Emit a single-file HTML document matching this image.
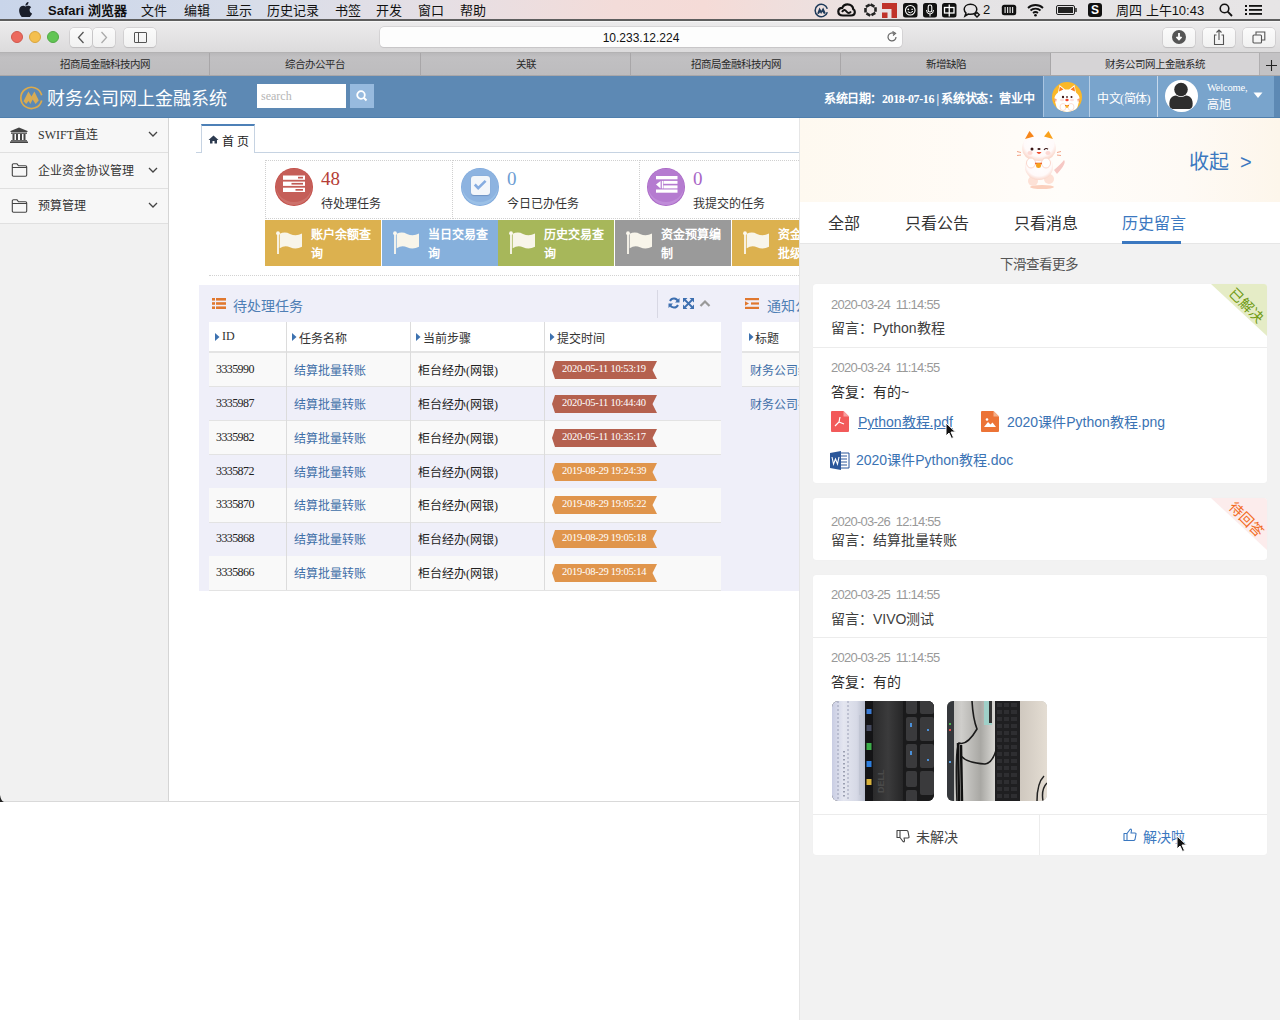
<!DOCTYPE html>
<html lang="zh-CN"><head><meta charset="utf-8">
<style>
*{box-sizing:border-box;margin:0;padding:0}
html,body{width:1280px;height:1020px;overflow:hidden;background:#fff;font-family:"Liberation Sans",sans-serif;}
.abs{position:absolute}
#menubar{position:absolute;left:0;top:0;width:1280px;height:21px;background:linear-gradient(90deg,#c9d5ea 0%,#d8dde9 20%,#e6dfe4 35%,#f3dcd9 48%,#f5dbd7 55%,#ede0df 64%,#e5e3e5 72%,#e7e5e6 100%);border-bottom:2px solid #5e5e5e;font-size:13px;color:#111}
#menubar>span{position:absolute;top:0px;white-space:nowrap}
#toolbar{position:absolute;left:0;top:21px;width:1280px;height:32px;background:linear-gradient(#ecebec,#dcdbdc);border-top:1px solid #f6f6f6;border-bottom:1px solid #b3b2b3}
#tabbar{position:absolute;left:0;top:53px;width:1280px;height:23px;background:linear-gradient(#b9b8ba,#c1c0c2 20%,#bdbcbe);border-bottom:1px solid #a9a7a9}
.tab{position:absolute;top:0;height:22px;border-left:1px solid #a8a6a8;font-size:10.5px;color:#2a2a2a;text-align:center;line-height:23px}
#header{position:absolute;left:0;top:76px;width:1280px;height:42px;background:#5d89b4}
#sidebar{position:absolute;left:0;top:118px;width:169px;height:683px;background:#f1f1f1;border-right:1px solid #d5d5d5}
#content{position:absolute;left:169px;top:118px;width:630px;height:683px;background:#fff;overflow:hidden}
#panel{position:absolute;left:799px;top:118px;width:481px;height:902px;background:#f2f2f2;border-left:1px solid #e6e6e6}
#winbottom{position:absolute;left:0;top:801px;width:799px;height:1px;background:#d9d9d9}
.btn{background:linear-gradient(#fbfbfb,#f1f1f1);border-radius:4px;box-shadow:0 0 0 0.5px #c2c0c2,0 0.5px 1px rgba(0,0,0,.15)}
.sitem{position:absolute;left:0;width:168px;background:#f7f7f7;border-bottom:1px solid #e0e0e0}
.stext{font-size:12px;color:#333;white-space:nowrap}
.statbox{height:59px;border:1px dotted #d0d0d0}
.ns{font-family:"Liberation Sans",sans-serif}
#toolbar>*{margin-top:-2px}
.serif{font-family:"Liberation Serif",serif}
.cj{font-family:"Liberation Sans",sans-serif}
</style></head>
<body>
<div id="menubar">
<svg class="abs" style="left:19px;top:2px" width="13" height="15" viewBox="0 0 13 15"><path d="M10.6 8c0-1.9 1.6-2.8 1.6-2.8-.9-1.3-2.3-1.5-2.8-1.5-1.2-.1-2.3.7-2.9.7-.6 0-1.5-.7-2.5-.7C2.7 3.7 1.5 4.5.8 5.7c-1.4 2.4-.4 6 1 8 .7 1 1.4 2 2.5 2 1 0 1.4-.7 2.6-.7s1.5.7 2.6.6c1.1 0 1.8-1 2.4-2 .8-1.1 1.1-2.2 1.1-2.2S10.6 10.700 10.6 8zM8.700 2.400C9.200 1.800 9.600.9 9.500 0c-.8 0-1.700.5-2.300 1.200-.5.600-.9 1.500-.8 2.300.9.1 1.800-.4 2.300-1.100z" fill="#1a1e2a"></path></svg>
<span style="left: 48px; font-weight: bold; font-size: 13px; line-height: 1.2; top: 3px;">Safari <span class="cj">浏览器</span></span>
<span style="left: 141px; line-height: 1.2; top: 3px;"><span class="cj">文件</span></span>
<span style="left: 184px; line-height: 1.2; top: 3px;"><span class="cj">编辑</span></span>
<span style="left: 226px; line-height: 1.2; top: 3px;"><span class="cj">显示</span></span>
<span style="left: 267px; line-height: 1.2; top: 3px;"><span class="cj">历史记录</span></span>
<span style="left: 335px; line-height: 1.2; top: 3px;"><span class="cj">书签</span></span>
<span style="left: 376px; line-height: 1.2; top: 3px;"><span class="cj">开发</span></span>
<span style="left: 418px; line-height: 1.2; top: 3px;"><span class="cj">窗口</span></span>
<span style="left: 460px; line-height: 1.2; top: 3px;"><span class="cj">帮助</span></span>
<svg class="abs" style="left:814px;top:3px" width="15" height="15" viewBox="0 0 15 15"><path d="M13.300 5.800 A6.200 6.200 0 1 0 13.300 9.200" fill="none" stroke="#1d3a5a" stroke-width="1.500"></path><path d="M3.200 10.500 L5.500 4.500 L7.300 7.800 L9.200 4.500 L11.800 10.200 L10 11 L8.300 8.800 L7.200 11 L6 9.200 L4.800 11 Z" fill="#1d3a5a"></path></svg>
<svg class="abs" style="left:837px;top:3px" width="19" height="14" viewBox="0 0 19 14"><path d="M6 12.500 C2.500 12.500 1.300 10.500 1.300 8.500 C1.300 6.300 3 4.800 5.300 4.800 C6.300 2.300 8.500 1.300 10.500 1.300 C14 1.300 16 3.800 16.300 6.300 C17.500 6.800 17.800 8 17.800 9 C17.800 11 16.300 12.500 14 12.500 Z" fill="none" stroke="#111" stroke-width="2.200"></path><path d="M5 9 C6.500 6.500 8 6.500 9.500 8.500 C11 10.500 12.500 10.500 14 8.500" fill="none" stroke="#111" stroke-width="2"></path></svg>
<svg class="abs" style="left:864px;top:3px" width="13" height="14" viewBox="0 0 13 14"><path d="M6.500 1.300 L11.500 4.200 L11.500 9.800 L6.500 12.700 L1.500 9.800 L1.500 4.200 Z" fill="none" stroke="#222" stroke-width="2.600" stroke-dasharray="4.500 1.300"></path></svg>
<svg class="abs" style="left:882px;top:3px" width="16" height="15" viewBox="0 0 16 15"><path d="M0 0 H15 V15 H9.500 V6 H0 Z" fill="#c0332a"></path><rect x="0" y="9.500" width="5.500" height="5.500" fill="#c0332a"></rect></svg>
<svg class="abs" style="left:903px;top:3px" width="15" height="15" viewBox="0 0 15 15"><rect x="0" y="0" width="14.500" height="14.500" rx="2.500" fill="#111"></rect><circle cx="7.250" cy="7.250" r="4.800" fill="none" stroke="#fff" stroke-width="1.100"></circle><circle cx="5.300" cy="6.300" r="0.900" fill="#fff"></circle><path d="M8.300 6.300 H10 M4.800 8.800 Q7.500 11 10 8.300" stroke="#fff" stroke-width="1" fill="none"></path></svg>
<svg class="abs" style="left:923px;top:3px" width="15" height="15" viewBox="0 0 15 15"><rect x="0" y="0" width="14" height="14.500" rx="2.500" fill="#111"></rect><rect x="5.200" y="2" width="3.600" height="7" rx="1.800" fill="none" stroke="#fff" stroke-width="1.100"></rect><path d="M3.500 7 Q3.500 11 7 11 Q10.500 11 10.500 7 M7 11 V13.500" stroke="#fff" stroke-width="1" fill="none"></path></svg>
<svg class="abs" style="left:942px;top:3px" width="15" height="15" viewBox="0 0 15 15"><rect x="0" y="0" width="14.500" height="14.500" rx="2.500" fill="#111"></rect><rect x="2.500" y="4.500" width="9.500" height="5.500" fill="none" stroke="#fff" stroke-width="1.300"></rect><path d="M7.250 1.500 V13.500" stroke="#fff" stroke-width="1.300"></path></svg>
<svg class="abs" style="left:963px;top:3px" width="18" height="15" viewBox="0 0 18 15"><path d="M7.500 1.200 C11.300 1.200 13.800 3.500 13.800 6.300 C13.800 9 11.300 11.300 7.500 11.300 C6.700 11.300 6 11.200 5.300 11 L2 13 L3 10 C1.800 9 1.200 7.700 1.200 6.300 C1.200 3.500 3.700 1.200 7.500 1.200 Z" fill="none" stroke="#111" stroke-width="1.500"></path><path d="M14 9.500 L16.300 11.800 L14 14 L11.700 11.800 Z" fill="none" stroke="#111" stroke-width="1.400"></path></svg>
<span style="left: 983px; top: 2px; font-size: 13px; line-height: 1.2;">2</span>
<svg class="abs" style="left:1001px;top:4px" width="16" height="12" viewBox="0 0 16 12"><rect x="0.800" y="0.800" width="14.400" height="10.400" rx="2.500" fill="#111"></rect><g fill="#ddd"><rect x="3.500" y="3" width="1.200" height="6"></rect><rect x="6" y="3" width="1.200" height="6"></rect><rect x="8.500" y="3" width="1.200" height="6"></rect><rect x="11" y="3" width="1.200" height="6"></rect></g></svg>
<svg class="abs" style="left:1027px;top:3px" width="17" height="14" viewBox="0 0 17 14"><path d="M1 5 C5 1 12 1 16 5" stroke="#111" stroke-width="1.8" fill="none"></path><path d="M3.500 7.500 C6 5 11 5 13.500 7.500" stroke="#111" stroke-width="1.800" fill="none"></path><path d="M6 10 C7.500 8.800 9.500 8.800 11 10" stroke="#111" stroke-width="1.800" fill="none"></path><circle cx="8.500" cy="12.300" r="1.300" fill="#111"></circle></svg>
<div class="abs" style="left:1056px;top:5px;width:19px;height:10px;border:1.3px solid #222;border-radius:2px;padding:1px"><div style="width:100%;height:100%;background:#222"></div></div>
<div class="abs" style="left:1075px;top:8px;width:2px;height:4px;background:#555"></div>
<div class="abs" style="left:1088px;top:3px;width:14px;height:14px;background:#111;border-radius:3px;color:#fff;font-size:12px;line-height:14px;text-align:center;font-weight:bold">S</div>
<span style="left: 1116px; top: 3px; font-size: 13px; line-height: 1.2;"><span class="cj">周四</span> <span class="cj">上午</span>10:43</span>
<svg class="abs" style="left:1219px;top:3px" width="14" height="14" viewBox="0 0 14 14"><circle cx="5.500" cy="5.500" r="4.300" fill="none" stroke="#111" stroke-width="1.600"></circle><path d="M8.700 8.700 L13 13" stroke="#111" stroke-width="1.800"></path></svg>
<svg class="abs" style="left:1245px;top:4px" width="17" height="12" viewBox="0 0 17 12"><g fill="#111"><rect x="0" y="1" width="2" height="2"></rect><rect x="0" y="5" width="2" height="2"></rect><rect x="0" y="9" width="2" height="2"></rect><rect x="4" y="1" width="13" height="1.800"></rect><rect x="4" y="5" width="13" height="1.800"></rect><rect x="4" y="9" width="13" height="1.800"></rect></g></svg>
</div>
<div id="toolbar">
<div class="abs" style="left:11px;top:11px;width:12px;height:12px;border-radius:50%;background:#ec6a5e;border:0.5px solid #d0584d"></div>
<div class="abs" style="left:29px;top:11px;width:12px;height:12px;border-radius:50%;background:#f4bf4f;border:0.5px solid #d9a53e"></div>
<div class="abs" style="left:47px;top:11px;width:12px;height:12px;border-radius:50%;background:#61c554;border:0.5px solid #52a946"></div>
<div class="btn abs" style="left:70px;top:8px;width:22px;height:19px"></div>
<div class="btn abs" style="left:93px;top:8px;width:22px;height:19px"></div>
<svg class="abs" style="left:77px;top:11px" width="8" height="13" viewBox="0 0 8 13"><path d="M6.500 1 L1.500 6.500 L6.500 12" stroke="#555" stroke-width="1.300" fill="none"></path></svg>
<svg class="abs" style="left:100px;top:11px" width="8" height="13" viewBox="0 0 8 13"><path d="M1.500 1 L6.500 6.500 L1.500 12" stroke="#aaa" stroke-width="1.300" fill="none"></path></svg>
<div class="btn abs" style="left:124px;top:8px;width:32px;height:19px"></div>
<div class="abs" style="left:134px;top:12px;width:13px;height:11px;border:1.300px solid #555;border-radius:1px"></div>
<div class="abs" style="left:138px;top:12px;width:1.300px;height:11px;background:#555"></div>
<div class="abs" style="left:380px;top:7px;width:522px;height:20px;background:#fdfdfd;border-radius:4px;box-shadow:0 0 0 0.5px #c6c4c6,0 0.5px 1px rgba(0,0,0,.1);font-size:12px;text-align:center;line-height:22px;color:#111">10.233.12.224</div>
<svg class="abs" style="left:886px;top:11px" width="12" height="12" viewBox="0 0 12 12"><path d="M10 6 A4 4 0 1 1 8 2.500" stroke="#666" stroke-width="1.200" fill="none"></path><path d="M6.500 0.500 L9.500 2.300 L7 4.500" stroke="#666" stroke-width="1.200" fill="none"></path></svg>
<div class="btn abs" style="left:1163px;top:8px;width:32px;height:19px"></div>
<div class="abs" style="left:1172px;top:10px;width:14px;height:14px;border-radius:50%;background:#555"></div>
<svg class="abs" style="left:1172px;top:10px" width="14" height="14" viewBox="0 0 14 14"><path d="M7 3 L7 9 M4.500 6.800 L7 9.500 L9.500 6.800" stroke="#fff" stroke-width="1.800" fill="none"></path></svg>
<div class="btn abs" style="left:1203px;top:8px;width:32px;height:19px"></div>
<svg class="abs" style="left:1211px;top:9px" width="16" height="17" viewBox="0 0 16 17"><path d="M5.500 6 L3.500 6 L3.500 15.500 L12.500 15.500 L12.500 6 L10.500 6" stroke="#555" stroke-width="1.100" fill="none"></path><path d="M8 11 L8 1 M5.500 3.500 L8 1 L10.500 3.500" stroke="#555" stroke-width="1.100" fill="none"></path></svg>
<div class="btn abs" style="left:1243px;top:8px;width:32px;height:19px"></div>
<svg class="abs" style="left:1252px;top:11px" width="14" height="13" viewBox="0 0 14 13"><rect x="1" y="4" width="8.500" height="8" stroke="#555" stroke-width="1.100" fill="none" rx="1"></rect><path d="M4 3.800 L4 1 L12.800 1 L12.800 9 L9.800 9" stroke="#555" stroke-width="1.100" fill="none"></path></svg>
</div>
<div id="tabbar">
<div class="tab" style="left:0;width:210px;border-left:none"><span class="cj">招商局金融科技内网</span></div>
<div class="tab" style="left:209px;width:211px"><span class="cj">综合办公平台</span></div>
<div class="tab" style="left:420px;width:210px"><span class="cj">关联</span></div>
<div class="tab" style="left:630px;width:210px"><span class="cj">招商局金融科技内网</span></div>
<div class="tab" style="left:840px;width:210px"><span class="cj">新增缺陷</span></div>
<div class="tab" style="left:1050px;width:210px;background:#d6d4d6;border-right:1px solid #b0aeb0;height:22px"><span class="cj">财务公司网上金融系统</span></div>
<div class="tab" style="left:1260px;width:20px;border-left:none;background:#c3c2c4"></div><svg class="abs" style="left:1266px;top:7px" width="11" height="11" viewBox="0 0 11 11"><path d="M5.5 0 V11 M0 5.5 H11" stroke="#222" stroke-width="1.1"></path></svg>
</div>
<div id="header">
<svg class="abs" style="left:18px;top:8px" width="28" height="28" viewBox="0 0 28 28"><path d="M23.7 11.3 A10.6 10.6 0 1 0 23.7 16.5" fill="none" stroke="#dcaa4c" stroke-width="1.7"></path><path d="M5.5 17.3 L10.4 7.6 L13.5 12.6 L16.4 7.6 L20.8 16.5 L17.6 20 L14.6 15.6 L12.4 20 L10.6 17 L8.2 20 Z" fill="#d8ab54"></path></svg>
<div class="abs serif" style="left: 47px; top: 13px; font-size: 18px; color: rgb(255, 255, 255); white-space: nowrap; letter-spacing: 0px; line-height: 1.2;"><span class="cj">财务公司网上金融系统</span></div>
<div class="abs serif" style="left:257px;top:8px;width:89px;height:24px;background:#fff;font-size:12px;color:#b5b5b5;line-height:24px;padding-left:4px">search</div>
<div class="abs" style="left:350px;top:8px;width:24px;height:24px;background:#97bade"></div>
<svg class="abs" style="left:355px;top:13px" width="14" height="14" viewBox="0 0 14 14"><circle cx="6" cy="6" r="3.8" fill="none" stroke="#fff" stroke-width="1.8"></circle><path d="M8.8 8.8 L11.5 11.5" stroke="#fff" stroke-width="2"></path></svg>
<div class="abs serif" style="left: 824px; top: 16px; font-size: 12px; letter-spacing: -0.4px; color: rgb(255, 255, 255); font-weight: bold; white-space: nowrap; line-height: 1.2;"><span class="cj">系统日期：</span>2018-07-16 | <span class="cj">系统状态：营业中</span></div>
<div class="abs" style="left:1043px;top:0;width:231px;height:41px;background:#79a4cc;border-left:1px solid #a9c5e2"></div>
<div class="abs" style="left:1089px;top:0;width:1px;height:41px;background:#b7cfe6"></div>
<div class="abs" style="left:1157px;top:0;width:1px;height:41px;background:#c7d9ec"></div>
<div class="abs" style="left:0;top:41px;width:1280px;height:1px;background:#4f7fad"></div>
<div class="abs" style="left:1052px;top:5.5px;width:30px;height:30px;border-radius:50%;background:#fbb828;overflow:hidden">
<svg width="30" height="30" viewBox="0 0 30 30">
<path d="M6 10.5 L7.5 3.0 L13 7.5 L17 7.5 L22.5 3.0 L24 10.5 Q29 14.5 27 19.5 L24 30.5 L6 30.5 L3 19.5 Q1 14.5 6 10.5 Z" fill="#fff"></path>
<path d="M7.8 4.5 L7 9.5 L11.5 7.5 Z M22.2 4.5 L23 9.5 L18.5 7.5 Z" fill="#fb7a1c"></path>
<ellipse cx="11" cy="15.0" rx="1.1" ry="1.2" fill="#3a1010"></ellipse><ellipse cx="19.5" cy="15.0" rx="1" ry="0.9" fill="#3a1010"></ellipse>
<ellipse cx="15" cy="15.0" rx="1.2" ry="0.8" fill="#3a1010"></ellipse>
<ellipse cx="15" cy="18.0" rx="1.7" ry="1.2" fill="#f5402a"></ellipse>
<ellipse cx="10" cy="18.0" rx="2" ry="1.3" fill="#fde0dc"></ellipse><ellipse cx="20" cy="18.0" rx="2" ry="1.3" fill="#fde0dc"></ellipse>
<path d="M2 17.0 L4.5 17.5 M2 19.0 L4.5 18.8 M28 17.0 L25.5 17.5 M28 19.0 L25.5 18.8" stroke="#f0733a" stroke-width="0.8"></path>
<ellipse cx="11" cy="25.0" rx="3" ry="3.5" fill="#fff" stroke="#fbd6c8" stroke-width="0.8"></ellipse><ellipse cx="19" cy="25.0" rx="3" ry="3.5" fill="#fff" stroke="#fbd6c8" stroke-width="0.8"></ellipse>
<path d="M13 23.5 L17 23.5" stroke="#f26a2a" stroke-width="1.2"></path><circle cx="15" cy="24.5" r="1.4" fill="#f7b02a"></circle>
</svg></div>
<div class="abs serif" style="left: 1097px; top: 16px; font-size: 12px; letter-spacing: -0.5px; color: rgb(255, 255, 255); white-space: nowrap; line-height: 1.2;"><span class="cj">中文</span>(<span class="cj">简体</span>)</div>
<div class="abs" style="left:1165px;top:3.7px;width:32.6px;height:32.6px;border-radius:50%;background:#fff;overflow:hidden">
 <svg width="32" height="32" viewBox="0 0 32 32"><path d="M4.5 26 C3.5 19 7 15.5 11 15.5 L21 15.5 C25 15.5 28.5 19 27.5 26 C27 28.5 25 29 23 29 L9 29 C7 29 5 28.5 4.5 26 Z" fill="#2e2e2e"></path><circle cx="16" cy="9.5" r="7.6" fill="#fff"></circle><circle cx="16" cy="9.5" r="6.8" fill="#2e2e2e"></circle></svg>
</div>
<div class="abs serif" style="left: 1207px; top: 6px; font-size: 10.5px; letter-spacing: -0.2px; color: rgb(255, 255, 255); white-space: nowrap; line-height: 1.2;">Welcome,</div>
<div class="abs serif" style="left: 1207px; top: 22px; font-size: 12px; color: rgb(255, 255, 255); white-space: nowrap; line-height: 1.2;"><span class="cj">高旭</span></div>
<svg class="abs" style="left:1253px;top:16px" width="10" height="7" viewBox="0 0 10 7"><path d="M0.5 0.5 L9.5 0.5 L5 6 Z" fill="#fff"></path></svg>
</div>
<div id="sidebar">
<div class="sitem" style="top:0;height:35px"></div>
<div class="sitem" style="top:35px;height:36px"></div>
<div class="sitem" style="top:71px;height:35px"></div>
<svg class="abs" style="left:10px;top:9px" width="18" height="16" viewBox="0 0 18 16"><path d="M9 0.5 L17.5 4 L17.5 5 L0.5 5 L0.5 4 Z" fill="#444"></path><rect x="1" y="5.5" width="16" height="1.3" fill="#444"></rect><rect x="2.5" y="7" width="2" height="6" fill="#444"></rect><rect x="6" y="7" width="2" height="6" fill="#444"></rect><rect x="10" y="7" width="2" height="6" fill="#444"></rect><rect x="13.5" y="7" width="2" height="6" fill="#444"></rect><rect x="1" y="13.2" width="16" height="1.3" fill="#444"></rect><rect x="0" y="14.5" width="18" height="1.5" fill="#444"></rect></svg>
<svg class="abs" style="left:11px;top:45px" width="17" height="14" viewBox="0 0 17 14"><path d="M1.3 2 Q1.3 0.8 2.5 0.8 L6 0.8 L7.5 2.8 L14.5 2.8 Q15.7 2.8 15.7 4 L15.7 12 Q15.7 13.2 14.5 13.2 L2.5 13.2 Q1.3 13.2 1.3 12 Z M1.3 4.5 L15.7 4.5" fill="none" stroke="#444" stroke-width="1.1"></path></svg>
<svg class="abs" style="left:11px;top:81px" width="17" height="14" viewBox="0 0 17 14"><path d="M1.3 2 Q1.3 0.8 2.5 0.8 L6 0.8 L7.5 2.8 L14.5 2.8 Q15.7 2.8 15.7 4 L15.7 12 Q15.7 13.2 14.5 13.2 L2.5 13.2 Q1.3 13.2 1.3 12 Z M1.3 4.5 L15.7 4.5" fill="none" stroke="#444" stroke-width="1.1"></path></svg>
<div class="abs serif stext" style="left: 38px; top: 10px; line-height: 1.2;">SWIFT<span class="cj">直连</span></div>
<div class="abs serif stext" style="left: 38px; top: 46px; line-height: 1.2;"><span class="cj">企业资金协议管理</span></div>
<div class="abs serif stext" style="left: 38px; top: 81px; line-height: 1.2;"><span class="cj">预算管理</span></div>
<svg class="abs" style="left:148px;top:13px" width="10" height="7" viewBox="0 0 10 7"><path d="M1 1 L5 5 L9 1" stroke="#444" stroke-width="1.3" fill="none"></path></svg>
<svg class="abs" style="left:148px;top:49px" width="10" height="7" viewBox="0 0 10 7"><path d="M1 1 L5 5 L9 1" stroke="#444" stroke-width="1.3" fill="none"></path></svg>
<svg class="abs" style="left:148px;top:84px" width="10" height="7" viewBox="0 0 10 7"><path d="M1 1 L5 5 L9 1" stroke="#444" stroke-width="1.3" fill="none"></path></svg>
</div>
<div id="content">
<div class="abs" style="left:27px;top:34px;width:603px;height:1px;background:#c6d3e2"></div>
<div class="abs" style="left:32px;top:6px;width:54px;height:29px;background:#fff;border:1px solid #c6d3e2;border-top:2px solid #4d80b7;border-bottom:none"></div>
<svg class="abs" style="left:39px;top:17px" width="11" height="9" viewBox="0 0 11 9"><path d="M5.5 0.5 L10.5 5 L9 5 L9 8.5 L6.5 8.5 L6.5 6 L4.5 6 L4.5 8.5 L2 8.5 L2 5 L0.5 5 Z" fill="#2d3b50"></path></svg>
<div class="abs serif" style="left: 53px; top: 17px; font-size: 12px; color: rgb(34, 34, 34); letter-spacing: 3px; white-space: nowrap; line-height: 1.2;"><span class="cj">首页</span></div>
<!-- stats -->
<div class="abs" style="left:105.60000000000002px;top:49.80000000000001px;width:38px;height:38px;border-radius:50%;background:#c24e48"></div><div class="abs" style="left:106.60000000000002px;top:50.80000000000001px;width:36px;height:36px;border-radius:50%;background:#cd716b"></div><div class="abs" style="left:106.60000000000002px;top:50.80000000000001px;width:36px;height:33px;border-radius:50%;background:#c55e58"></div><svg class="abs" style="left:114px;top:57px" width="23" height="18" viewBox="0 0 23 18"><g fill="#fff"><rect x="0" y="0.5" width="22" height="4.3"></rect><rect x="0" y="6.6" width="22" height="4.3"></rect><rect x="0" y="12.7" width="22" height="4.3"></rect></g><g fill="#c05a54"><rect x="15" y="1.8" width="5" height="1.7"></rect><rect x="8.5" y="7.9" width="11.5" height="1.7"></rect><rect x="12.5" y="14" width="7.5" height="1.7"></rect></g></svg>
<div class="abs" style="left:292px;top:50px;width:38px;height:38px;border-radius:50%;background:#80aadd"></div><div class="abs" style="left:293px;top:51px;width:36px;height:36px;border-radius:50%;background:#9bc0e6"></div><div class="abs" style="left:293px;top:51px;width:36px;height:33px;border-radius:50%;background:#8db3e0"></div><div class="abs" style="left:302px;top:58px;width:18.5px;height:18.5px;background:#f3f6fa;border-radius:3px;box-shadow:0 0.5px 1px rgba(60,90,140,.35)"></div><svg class="abs" style="left:302px;top:58px" width="19" height="19" viewBox="0 0 19 19"><path d="M3.8 8.5 L7.2 12.2 L14.6 4.8" stroke="#86ace0" stroke-width="2.6" fill="none"></path></svg>
<div class="abs" style="left:478px;top:50px;width:38px;height:38px;border-radius:50%;background:#aa68c6"></div><div class="abs" style="left:479px;top:51px;width:36px;height:36px;border-radius:50%;background:#c08cd9"></div><div class="abs" style="left:479px;top:51px;width:36px;height:33px;border-radius:50%;background:#b57bd0"></div><svg class="abs" style="left:486.5px;top:57.5px" width="22" height="17" viewBox="0 0 22 17"><g fill="#fff"><rect x="0" y="0" width="21.5" height="3.3"></rect><rect x="7.5" y="4.9" width="14" height="2.9"></rect><rect x="7.5" y="9.4" width="14" height="3"></rect><rect x="0" y="13.5" width="21.5" height="3.2"></rect><rect x="5.8" y="4.9" width="1.3" height="7.5"></rect><path d="M0 8.6 L4.6 4.9 L4.6 12.4 Z"></path></g></svg>
<div class="abs serif" style="left: 152px; top: 50px; font-size: 19px; color: rgb(181, 61, 54); line-height: 1.2;">48</div>
<div class="abs serif" style="left: 338px; top: 50px; font-size: 19px; color: rgb(109, 157, 211); line-height: 1.2;">0</div>
<div class="abs serif" style="left: 524px; top: 50px; font-size: 19px; color: rgb(168, 102, 198); line-height: 1.2;">0</div>
<div class="abs serif" style="left: 152px; top: 79px; font-size: 12px; color: rgb(51, 51, 51); white-space: nowrap; line-height: 1.2;"><span class="cj">待处理任务</span></div>
<div class="abs serif" style="left: 338px; top: 79px; font-size: 12px; color: rgb(51, 51, 51); white-space: nowrap; line-height: 1.2;"><span class="cj">今日已办任务</span></div>
<div class="abs serif" style="left: 524px; top: 79px; font-size: 12px; color: rgb(51, 51, 51); white-space: nowrap; line-height: 1.2;"><span class="cj">我提交的任务</span></div>
<div class="abs" style="left:96px;top:102px;width:116px;height:46px;background:#dcb14f"></div>
<svg class="abs" style="left:107px;top:113px" width="27" height="23" viewBox="0 0 27 23"><circle cx="2" cy="2.2" r="1.9" fill="#fbf8ee"></circle><rect x="1.1" y="2" width="1.8" height="21" fill="#fbf8ee"></rect><path d="M3.7 2.8 Q9 0.3 14 3 Q20 5.8 26 2.6 L26 15.8 Q20 19 14 16.3 Q9 13.6 3.7 17.2 Z" fill="#f8f5ea"></path></svg>
<div class="abs serif" style="left:142px;top:108px;font-size:12px;line-height:19px;color:#fff;font-weight:bold;white-space:nowrap"><span class="cj">账户余额查</span><br><span class="cj">询</span></div>
<div class="abs" style="left:213px;top:102px;width:116px;height:46px;background:#86b0dc"></div>
<svg class="abs" style="left:224px;top:113px" width="27" height="23" viewBox="0 0 27 23"><circle cx="2" cy="2.2" r="1.9" fill="#fbf8ee"></circle><rect x="1.1" y="2" width="1.8" height="21" fill="#fbf8ee"></rect><path d="M3.7 2.8 Q9 0.3 14 3 Q20 5.8 26 2.6 L26 15.8 Q20 19 14 16.3 Q9 13.6 3.7 17.2 Z" fill="#f8f5ea"></path></svg>
<div class="abs serif" style="left:259px;top:108px;font-size:12px;line-height:19px;color:#fff;font-weight:bold;white-space:nowrap"><span class="cj">当日交易查</span><br><span class="cj">询</span></div>
<div class="abs" style="left:329px;top:102px;width:116px;height:46px;background:#a7b75a"></div>
<svg class="abs" style="left:340px;top:113px" width="27" height="23" viewBox="0 0 27 23"><circle cx="2" cy="2.2" r="1.9" fill="#fbf8ee"></circle><rect x="1.1" y="2" width="1.8" height="21" fill="#fbf8ee"></rect><path d="M3.7 2.8 Q9 0.3 14 3 Q20 5.8 26 2.6 L26 15.8 Q20 19 14 16.3 Q9 13.6 3.7 17.2 Z" fill="#f8f5ea"></path></svg>
<div class="abs serif" style="left:375px;top:108px;font-size:12px;line-height:19px;color:#fff;font-weight:bold;white-space:nowrap"><span class="cj">历史交易查</span><br><span class="cj">询</span></div>
<div class="abs" style="left:446px;top:102px;width:116px;height:46px;background:#9a9a9a"></div>
<svg class="abs" style="left:457px;top:113px" width="27" height="23" viewBox="0 0 27 23"><circle cx="2" cy="2.2" r="1.9" fill="#fbf8ee"></circle><rect x="1.1" y="2" width="1.8" height="21" fill="#fbf8ee"></rect><path d="M3.7 2.8 Q9 0.3 14 3 Q20 5.8 26 2.6 L26 15.8 Q20 19 14 16.3 Q9 13.6 3.7 17.2 Z" fill="#f8f5ea"></path></svg>
<div class="abs serif" style="left:492px;top:108px;font-size:12px;line-height:19px;color:#fff;font-weight:bold;white-space:nowrap"><span class="cj">资金预算编</span><br><span class="cj">制</span></div>
<div class="abs" style="left:563px;top:102px;width:116px;height:46px;background:#dcb14f"></div>
<svg class="abs" style="left:574px;top:113px" width="27" height="23" viewBox="0 0 27 23"><circle cx="2" cy="2.2" r="1.9" fill="#fbf8ee"></circle><rect x="1.1" y="2" width="1.8" height="21" fill="#fbf8ee"></rect><path d="M3.7 2.8 Q9 0.3 14 3 Q20 5.8 26 2.6 L26 15.8 Q20 19 14 16.3 Q9 13.6 3.7 17.2 Z" fill="#f8f5ea"></path></svg>
<div class="abs serif" style="left:609px;top:108px;font-size:12px;line-height:19px;color:#fff;font-weight:bold;white-space:nowrap"><span class="cj">资金预算审</span><br><span class="cj">批级</span></div>
<div class="abs" style="left:40px;top:157px;width:600px;height:1px;border-top:1px dotted #d2d2d2"></div>
<div class="abs" style="left:30px;top:167px;width:600px;height:306px;background:#efeff9"></div>
<svg class="abs" style="left:43px;top:180px" width="14" height="11" viewBox="0 0 14 11"><g fill="#e0782f"><rect x="0" y="0" width="3" height="2.6"></rect><rect x="4" y="0" width="10" height="2.6"></rect><rect x="0" y="4.2" width="3" height="2.6"></rect><rect x="4" y="4.2" width="10" height="2.6"></rect><rect x="0" y="8.4" width="3" height="2.6"></rect><rect x="4" y="8.4" width="10" height="2.6"></rect></g></svg>
<div class="abs serif" style="left: 64px; top: 180px; font-size: 14px; color: rgb(79, 127, 181); white-space: nowrap; line-height: 1.2;"><span class="cj">待处理任务</span></div>
<div class="abs" style="left:488px;top:172px;width:1px;height:28px;background:#d8d8e4"></div>
<svg class="abs" style="left:499px;top:179px" width="12" height="12" viewBox="0 0 12 12"><path d="M10 4.5 A4.3 4.3 0 0 0 2 4" stroke="#3d6fb0" stroke-width="2" fill="none"></path><path d="M2 7.5 A4.3 4.3 0 0 0 10 8" stroke="#3d6fb0" stroke-width="2" fill="none"></path><path d="M11.5 1 L11.5 5.5 L7 5.5 Z M0.5 11 L0.5 6.5 L5 6.5Z" fill="#3d6fb0"></path></svg>
<svg class="abs" style="left:514px;top:180px" width="11" height="11" viewBox="0 0 11 11"><path d="M2 2 L9 9 M9 2 L2 9" stroke="#3d6fb0" stroke-width="1.8"></path><path d="M0 0 L4.5 0 L0 4.5Z M11 0 L6.5 0 L11 4.5Z M0 11 L4.5 11 L0 6.5Z M11 11 L6.5 11 L11 6.5Z" fill="#3d6fb0"></path></svg>
<svg class="abs" style="left:530px;top:181px" width="12" height="9" viewBox="0 0 12 9"><path d="M1.5 7 L6 2.5 L10.5 7" stroke="#999" stroke-width="2.2" fill="none"></path></svg>
<svg class="abs" style="left:576px;top:180px" width="14" height="11" viewBox="0 0 14 11"><g fill="#e0782f"><rect x="0" y="0" width="14" height="2.2"></rect><rect x="6" y="4.4" width="8" height="2.2"></rect><rect x="0" y="8.8" width="14" height="2.2"></rect><path d="M0 3.2 L4 5.5 L0 7.8Z"></path></g></svg>
<div class="abs serif" style="left: 598px; top: 180px; font-size: 14px; color: rgb(79, 127, 181); white-space: nowrap; line-height: 1.2;"><span class="cj">通知公告</span></div>
<div class="abs" style="left:40px;top:204px;width:512px;height:31px;background:#fff;border-bottom:2px solid #e4e4e4"></div>
<div class="abs" style="left:40px;top:235.0px;width:512px;height:34.36px;background:#f9f9f9;border-bottom:1px solid #e3e3e3"></div>
<div class="abs serif" style="left: 47px; top: 244px; font-size: 12px; letter-spacing: -0.6px; color: rgb(34, 34, 34); line-height: 1.2;">3335990</div>
<div class="abs serif" style="left: 125px; top: 246px; font-size: 12px; color: rgb(63, 111, 168); white-space: nowrap; line-height: 1.2;"><span class="cj">结算批量转账</span></div>
<div class="abs serif" style="left: 249px; top: 246px; font-size: 12px; color: rgb(34, 34, 34); white-space: nowrap; line-height: 1.2;"><span class="cj">柜台经办</span>(<span class="cj">网银</span>)</div>
<svg class="abs" style="left:383px;top:243.0px" width="106" height="18" viewBox="0 0 106 18"><path d="M3 0 L105 0 L100.5 9 L105 18 L3 18 L0 9 Z" fill="#b5614f"></path></svg>
<div class="abs serif" style="left: 393px; top: 245px; font-size: 10.5px; letter-spacing: -0.25px; color: rgb(255, 255, 255); white-space: nowrap; line-height: 1.2;">2020-05-11 10:53:19</div>
<div class="abs" style="left:40px;top:268.86px;width:512px;height:34.36px;background:transparent;border-bottom:1px solid #e3e3e3"></div>
<div class="abs serif" style="left: 47px; top: 277.86px; font-size: 12px; letter-spacing: -0.6px; color: rgb(34, 34, 34); line-height: 1.2;">3335987</div>
<div class="abs serif" style="left: 125px; top: 279.86px; font-size: 12px; color: rgb(63, 111, 168); white-space: nowrap; line-height: 1.2;"><span class="cj">结算批量转账</span></div>
<div class="abs serif" style="left: 249px; top: 279.86px; font-size: 12px; color: rgb(34, 34, 34); white-space: nowrap; line-height: 1.2;"><span class="cj">柜台经办</span>(<span class="cj">网银</span>)</div>
<svg class="abs" style="left:383px;top:276.86px" width="106" height="18" viewBox="0 0 106 18"><path d="M3 0 L105 0 L100.5 9 L105 18 L3 18 L0 9 Z" fill="#b5614f"></path></svg>
<div class="abs serif" style="left: 393px; top: 278.86px; font-size: 10.5px; letter-spacing: -0.25px; color: rgb(255, 255, 255); white-space: nowrap; line-height: 1.2;">2020-05-11 10:44:40</div>
<div class="abs" style="left:40px;top:302.72px;width:512px;height:34.36px;background:#f9f9f9;border-bottom:1px solid #e3e3e3"></div>
<div class="abs serif" style="left: 47px; top: 311.72px; font-size: 12px; letter-spacing: -0.6px; color: rgb(34, 34, 34); line-height: 1.2;">3335982</div>
<div class="abs serif" style="left: 125px; top: 313.72px; font-size: 12px; color: rgb(63, 111, 168); white-space: nowrap; line-height: 1.2;"><span class="cj">结算批量转账</span></div>
<div class="abs serif" style="left: 249px; top: 313.72px; font-size: 12px; color: rgb(34, 34, 34); white-space: nowrap; line-height: 1.2;"><span class="cj">柜台经办</span>(<span class="cj">网银</span>)</div>
<svg class="abs" style="left:383px;top:310.72px" width="106" height="18" viewBox="0 0 106 18"><path d="M3 0 L105 0 L100.5 9 L105 18 L3 18 L0 9 Z" fill="#b5614f"></path></svg>
<div class="abs serif" style="left: 393px; top: 312.72px; font-size: 10.5px; letter-spacing: -0.25px; color: rgb(255, 255, 255); white-space: nowrap; line-height: 1.2;">2020-05-11 10:35:17</div>
<div class="abs" style="left:40px;top:336.58px;width:512px;height:34.36px;background:transparent;border-bottom:1px solid #e3e3e3"></div>
<div class="abs serif" style="left: 47px; top: 345.58px; font-size: 12px; letter-spacing: -0.6px; color: rgb(34, 34, 34); line-height: 1.2;">3335872</div>
<div class="abs serif" style="left: 125px; top: 347.58px; font-size: 12px; color: rgb(63, 111, 168); white-space: nowrap; line-height: 1.2;"><span class="cj">结算批量转账</span></div>
<div class="abs serif" style="left: 249px; top: 347.58px; font-size: 12px; color: rgb(34, 34, 34); white-space: nowrap; line-height: 1.2;"><span class="cj">柜台经办</span>(<span class="cj">网银</span>)</div>
<svg class="abs" style="left:383px;top:344.58px" width="106" height="18" viewBox="0 0 106 18"><path d="M3 0 L105 0 L100.5 9 L105 18 L3 18 L0 9 Z" fill="#e0954c"></path></svg>
<div class="abs serif" style="left: 393px; top: 346.58px; font-size: 10.5px; letter-spacing: -0.25px; color: rgb(255, 255, 255); white-space: nowrap; line-height: 1.2;">2019-08-29 19:24:39</div>
<div class="abs" style="left:40px;top:370.44px;width:512px;height:34.36px;background:#f9f9f9;border-bottom:1px solid #e3e3e3"></div>
<div class="abs serif" style="left: 47px; top: 379.44px; font-size: 12px; letter-spacing: -0.6px; color: rgb(34, 34, 34); line-height: 1.2;">3335870</div>
<div class="abs serif" style="left: 125px; top: 381.44px; font-size: 12px; color: rgb(63, 111, 168); white-space: nowrap; line-height: 1.2;"><span class="cj">结算批量转账</span></div>
<div class="abs serif" style="left: 249px; top: 381.44px; font-size: 12px; color: rgb(34, 34, 34); white-space: nowrap; line-height: 1.2;"><span class="cj">柜台经办</span>(<span class="cj">网银</span>)</div>
<svg class="abs" style="left:383px;top:378.44px" width="106" height="18" viewBox="0 0 106 18"><path d="M3 0 L105 0 L100.5 9 L105 18 L3 18 L0 9 Z" fill="#e0954c"></path></svg>
<div class="abs serif" style="left: 393px; top: 380.44px; font-size: 10.5px; letter-spacing: -0.25px; color: rgb(255, 255, 255); white-space: nowrap; line-height: 1.2;">2019-08-29 19:05:22</div>
<div class="abs" style="left:40px;top:404.29999999999995px;width:512px;height:34.36px;background:transparent;border-bottom:1px solid #e3e3e3"></div>
<div class="abs serif" style="left: 47px; top: 413.3px; font-size: 12px; letter-spacing: -0.6px; color: rgb(34, 34, 34); line-height: 1.2;">3335868</div>
<div class="abs serif" style="left: 125px; top: 415.3px; font-size: 12px; color: rgb(63, 111, 168); white-space: nowrap; line-height: 1.2;"><span class="cj">结算批量转账</span></div>
<div class="abs serif" style="left: 249px; top: 415.3px; font-size: 12px; color: rgb(34, 34, 34); white-space: nowrap; line-height: 1.2;"><span class="cj">柜台经办</span>(<span class="cj">网银</span>)</div>
<svg class="abs" style="left:383px;top:412.29999999999995px" width="106" height="18" viewBox="0 0 106 18"><path d="M3 0 L105 0 L100.5 9 L105 18 L3 18 L0 9 Z" fill="#e0954c"></path></svg>
<div class="abs serif" style="left: 393px; top: 414.3px; font-size: 10.5px; letter-spacing: -0.25px; color: rgb(255, 255, 255); white-space: nowrap; line-height: 1.2;">2019-08-29 19:05:18</div>
<div class="abs" style="left:40px;top:438.15999999999997px;width:512px;height:34.36px;background:#f9f9f9;border-bottom:1px solid #e3e3e3"></div>
<div class="abs serif" style="left: 47px; top: 447.16px; font-size: 12px; letter-spacing: -0.6px; color: rgb(34, 34, 34); line-height: 1.2;">3335866</div>
<div class="abs serif" style="left: 125px; top: 449.16px; font-size: 12px; color: rgb(63, 111, 168); white-space: nowrap; line-height: 1.2;"><span class="cj">结算批量转账</span></div>
<div class="abs serif" style="left: 249px; top: 449.16px; font-size: 12px; color: rgb(34, 34, 34); white-space: nowrap; line-height: 1.2;"><span class="cj">柜台经办</span>(<span class="cj">网银</span>)</div>
<svg class="abs" style="left:383px;top:446.15999999999997px" width="106" height="18" viewBox="0 0 106 18"><path d="M3 0 L105 0 L100.5 9 L105 18 L3 18 L0 9 Z" fill="#e0954c"></path></svg>
<div class="abs serif" style="left: 393px; top: 448.16px; font-size: 10.5px; letter-spacing: -0.25px; color: rgb(255, 255, 255); white-space: nowrap; line-height: 1.2;">2019-08-29 19:05:14</div>
<div class="abs" style="left:117px;top:204px;width:1px;height:268px;background:#dcdcdc"></div>
<div class="abs" style="left:241px;top:204px;width:1px;height:268px;background:#dcdcdc"></div>
<div class="abs" style="left:375px;top:204px;width:1px;height:268px;background:#dcdcdc"></div>
<svg class="abs" style="left:46px;top:215px" width="5" height="8" viewBox="0 0 5 8"><path d="M0 0 L4.5 4 L0 8Z" fill="#3d72b0"></path></svg>
<div class="abs serif" style="left: 53px; top: 211px; font-size: 12px; color: rgb(51, 51, 51); white-space: nowrap; line-height: 1.2;">ID</div>
<svg class="abs" style="left:123px;top:215px" width="5" height="8" viewBox="0 0 5 8"><path d="M0 0 L4.5 4 L0 8Z" fill="#3d72b0"></path></svg>
<div class="abs serif" style="left: 130px; top: 214px; font-size: 12px; color: rgb(51, 51, 51); white-space: nowrap; line-height: 1.2;"><span class="cj">任务名称</span></div>
<svg class="abs" style="left:247px;top:215px" width="5" height="8" viewBox="0 0 5 8"><path d="M0 0 L4.5 4 L0 8Z" fill="#3d72b0"></path></svg>
<div class="abs serif" style="left: 254px; top: 214px; font-size: 12px; color: rgb(51, 51, 51); white-space: nowrap; line-height: 1.2;"><span class="cj">当前步骤</span></div>
<svg class="abs" style="left:381px;top:215px" width="5" height="8" viewBox="0 0 5 8"><path d="M0 0 L4.5 4 L0 8Z" fill="#3d72b0"></path></svg>
<div class="abs serif" style="left: 388px; top: 214px; font-size: 12px; color: rgb(51, 51, 51); white-space: nowrap; line-height: 1.2;"><span class="cj">提交时间</span></div>
<div class="abs" style="left:573px;top:204px;width:60px;height:31px;background:#fff;border-bottom:2px solid #e4e4e4"></div>
<div class="abs" style="left:573px;top:235px;width:60px;height:34px;background:#f9f9f9;border-bottom:1px solid #e3e3e3"></div>
<svg class="abs" style="left:580px;top:215px" width="5" height="8" viewBox="0 0 5 8"><path d="M0 0 L4.5 4 L0 8Z" fill="#3d72b0"></path></svg>
<div class="abs serif" style="left: 586px; top: 214px; font-size: 12px; color: rgb(51, 51, 51); white-space: nowrap; line-height: 1.2;"><span class="cj">标题</span></div>
<div class="abs serif" style="left: 581px; top: 246px; font-size: 12px; color: rgb(63, 111, 168); white-space: nowrap; line-height: 1.2;"><span class="cj">财务公司结算</span></div>
<div class="abs serif" style="left: 581px; top: 280px; font-size: 12px; color: rgb(63, 111, 168); white-space: nowrap; line-height: 1.2;"><span class="cj">财务公司在线</span></div>
<div class="abs statbox" style="left:96px;top:42px;width:188px"></div>
<div class="abs statbox" style="left:283px;top:42px;width:188px"></div>
<div class="abs statbox" style="left:470px;top:42px;width:188px"></div>
</div>
<div id="winbottom"></div>
<svg class="abs" style="left:0;top:795px" width="4" height="7" viewBox="0 0 4 7"><path d="M0 0 L0 7 L4 7 Q1 6 0 0Z" fill="#222"></path></svg>
<div id="panel">
<div class="abs" style="left:0;top:0;width:480px;height:84px;background:linear-gradient(90deg,#fef9f0 0%,#fffbf6 35%,#fffdfa 55%,#fefaf5 80%,#fdf6eb 100%)"></div>
<svg class="abs" style="left:210px;top:8px" width="60" height="66" viewBox="0 0 60 66">
<defs><radialGradient id="cb" cx="50%" cy="40%" r="62%"><stop offset="0" stop-color="#fff"></stop><stop offset="0.72" stop-color="#fffafa"></stop><stop offset="1" stop-color="#f9d2c4"></stop></radialGradient></defs>
<ellipse cx="32" cy="61" rx="12" ry="2" fill="#fbd0bd"></ellipse>
<path d="M44 44 Q52 37 54 34 Q57 37 47 48 Z" fill="#f6c8c4"></path>
<ellipse cx="23" cy="55" rx="5" ry="5" fill="#fde1d6"></ellipse>
<ellipse cx="39" cy="53" rx="5" ry="5" fill="#fde1d6"></ellipse>
<ellipse cx="29" cy="41" rx="14" ry="13" fill="url(#cb)"></ellipse>
<path d="M14 15 L19.5 4.5 L25 11 Q29 9.5 33 11 L38.5 4.5 L44 15 Q47 21 45 27 Q41 35 29 35 Q17 35 13 27 Q11 21 14 15 Z" fill="url(#cb)"></path>
<path d="M15 13 L19.5 5 L24 10.5 Z" fill="#f7861a"></path>
<path d="M43 13 L38.5 5 L34 10.5 Z" fill="#f9a11b"></path>
<circle cx="22" cy="23" r="1.5" fill="#3a1616"></circle>
<path d="M34 23.8 Q36 21.6 38 23.2" stroke="#3a1616" stroke-width="1.1" fill="none"></path>
<ellipse cx="29" cy="23" rx="1.6" ry="0.9" fill="#3a1616"></ellipse>
<path d="M26.5 26 Q29 30 31.5 26 Z" fill="#ef4a2c"></path>
<ellipse cx="20" cy="27" rx="2.6" ry="2" fill="#fdd9d4"></ellipse><ellipse cx="38" cy="27" rx="2.6" ry="2" fill="#fdd9d4"></ellipse>
<path d="M7 25.5 L11 26.5 M7 29.5 L11 29 M51 25.5 L47 26.5 M51 29.5 L47 29" stroke="#f19a7a" stroke-width="0.9"></path>
<ellipse cx="21" cy="37" rx="4.5" ry="5" fill="#fff" stroke="#f9d3c6" stroke-width="0.9"></ellipse>
<ellipse cx="36" cy="37" rx="4.5" ry="5" fill="#fff" stroke="#f9d3c6" stroke-width="0.9"></ellipse>
<path d="M25 37.5 L32 37.5" stroke="#f06a30" stroke-width="1.6"></path>
<circle cx="28.5" cy="39.5" r="2.5" fill="#f6a21c"></circle>
</svg>
<div class="abs ns" style="left: 389px; top: 32px; font-size: 20px; color: rgb(59, 120, 192); white-space: nowrap; line-height: 1.2;"><span class="cj">收起</span> &nbsp;&gt;</div>
<div class="abs" style="left:0;top:84px;width:480px;height:42px;background:#fff;border-bottom:1px solid #e6e6e6"></div>
<div class="abs ns" style="left: 28px; top: 96px; font-size: 16px; color: rgb(51, 51, 51); white-space: nowrap; line-height: 1.2;"><span class="cj">全部</span></div>
<div class="abs ns" style="left: 105px; top: 96px; font-size: 16px; color: rgb(51, 51, 51); white-space: nowrap; line-height: 1.2;"><span class="cj">只看公告</span></div>
<div class="abs ns" style="left: 214px; top: 96px; font-size: 16px; color: rgb(51, 51, 51); white-space: nowrap; line-height: 1.2;"><span class="cj">只看消息</span></div>
<div class="abs ns" style="left: 322px; top: 96px; font-size: 16px; color: rgb(59, 120, 192); white-space: nowrap; line-height: 1.2;"><span class="cj">历史留言</span></div>
<div class="abs" style="left:322px;top:123px;width:59px;height:3px;background:#3b78c0"></div>
<div class="abs ns" style="left: 200px; top: 139px; font-size: 13.5px; color: rgb(85, 85, 85); white-space: nowrap; line-height: 1.2;"><span class="cj">下滑查看更多</span></div>
<div class="abs" style="left:13px;top:166px;width:454px;height:199px;background:#fff;border-radius:3px;box-shadow:0 0 1px rgba(0,0,0,.06)"></div>
<div class="abs" style="left:13px;top:229px;width:454px;height:1px;background:#ececec"></div>
<svg class="abs" style="left:411px;top:166px" width="56" height="52" viewBox="0 0 56 52"><path d="M0 0 L53 0 Q56 0 56 3 L56 52 Z" fill="#e5ecc6"></path></svg><div class="abs ns" style="left: 422px; top: 179px; width: 48px; text-align: center; font-size: 14px; color: rgb(111, 154, 18); transform: rotate(45deg); white-space: nowrap; line-height: 1.2;"><span class="cj">已解决</span></div>
<div class="abs ns" style="left: 31px; top: 179px; font-size: 13px; letter-spacing: -0.75px; color: rgb(153, 153, 153); white-space: nowrap; line-height: 1.2;">2020-03-24&nbsp; 11:14:55</div>
<div class="abs ns" style="left: 31px; top: 202px; font-size: 14px; color: rgb(64, 64, 64); white-space: nowrap; line-height: 1.2;"><span class="cj">留言：</span>Python<span class="cj">教程</span></div>
<div class="abs ns" style="left: 31px; top: 242px; font-size: 13px; letter-spacing: -0.75px; color: rgb(153, 153, 153); white-space: nowrap; line-height: 1.2;">2020-03-24&nbsp; 11:14:55</div>
<div class="abs ns" style="left: 31px; top: 266px; font-size: 14px; color: rgb(45, 45, 45); white-space: nowrap; line-height: 1.2;"><span class="cj">答复：有的</span>~</div>
<svg class="abs" style="left:31px;top:293px" width="18" height="21" viewBox="0 0 18 21"><path d="M0 1 Q0 0 1 0 L12.5 0 L18 5.5 L18 20 Q18 21 17 21 L1 21 Q0 21 0 20 Z" fill="#f25a5a"></path><path d="M12.5 0 L12.5 5.5 L18 5.5 Z" fill="#f9a0a0"></path><path d="M9 6 L8 11 L4 15 M8 11 L13 13" stroke="#fff" stroke-width="1.2" fill="none"></path></svg>
<svg class="abs" style="left:181px;top:293px" width="18" height="21" viewBox="0 0 18 21"><path d="M0 1 Q0 0 1 0 L12.5 0 L18 5.5 L18 20 Q18 21 17 21 L1 21 Q0 21 0 20 Z" fill="#ec7336"></path><path d="M12.5 0 L12.5 5.5 L18 5.5 Z" fill="#f5b08a"></path><path d="M3 16 L7 11 L9.5 13.5 L11.5 11.5 L15 16 Z" fill="#fff"></path><circle cx="6" cy="8.5" r="1.3" fill="#fff"></circle></svg>
<svg class="abs" style="left:30px;top:333px" width="20" height="19" viewBox="0 0 20 19"><path d="M7 2 L19 2 L19 17 L7 17 Z" fill="#fff" stroke="#2b579a" stroke-width="1"></path><path d="M9 5 H17 M9 8 H17 M9 11 H17 M9 14 H17" stroke="#2b579a" stroke-width="1"></path><path d="M0 2 L11 0 L11 19 L0 17 Z" fill="#2b579a"></path><path d="M2 6 L3.5 13 L5.5 8 L7.5 13 L9 6" stroke="#fff" stroke-width="1.1" fill="none"></path></svg>
<div class="abs ns" style="left: 58px; top: 296px; font-size: 14px; color: rgb(59, 115, 180); white-space: nowrap; text-decoration: underline; line-height: 1.2;">Python<span class="cj">教程</span>.pdf</div>
<div class="abs ns" style="left: 207px; top: 296px; font-size: 14px; color: rgb(59, 115, 180); white-space: nowrap; line-height: 1.2;">2020<span class="cj">课件</span>Python<span class="cj">教程</span>.png</div>
<div class="abs ns" style="left: 56px; top: 334px; font-size: 14px; color: rgb(59, 115, 180); white-space: nowrap; line-height: 1.2;">2020<span class="cj">课件</span>Python<span class="cj">教程</span>.doc</div>
<div class="abs" style="left:13px;top:380px;width:454px;height:62px;background:#fff;border-radius:3px;box-shadow:0 0 1px rgba(0,0,0,.06)"></div>
<svg class="abs" style="left:411px;top:380px" width="56" height="52" viewBox="0 0 56 52"><path d="M0 0 L53 0 Q56 0 56 3 L56 52 Z" fill="#fcecec"></path></svg><div class="abs ns" style="left: 422px; top: 393px; width: 48px; text-align: center; font-size: 14px; color: rgb(242, 106, 33); transform: rotate(45deg); white-space: nowrap; line-height: 1.2;"><span class="cj">待回答</span></div>
<div class="abs ns" style="left: 31px; top: 396px; font-size: 13px; letter-spacing: -0.75px; color: rgb(153, 153, 153); white-space: nowrap; line-height: 1.2;">2020-03-26&nbsp; 12:14:55</div>
<div class="abs ns" style="left: 31px; top: 414px; font-size: 14px; color: rgb(64, 64, 64); white-space: nowrap; line-height: 1.2;"><span class="cj">留言：结算批量转账</span></div>
<div class="abs" style="left:13px;top:457px;width:454px;height:280px;background:#fff;border-radius:3px;box-shadow:0 0 1px rgba(0,0,0,.06)"></div>
<div class="abs" style="left:13px;top:519px;width:454px;height:1px;background:#ececec"></div>
<div class="abs ns" style="left: 31px; top: 469px; font-size: 13px; letter-spacing: -0.75px; color: rgb(153, 153, 153); white-space: nowrap; line-height: 1.2;">2020-03-25&nbsp; 11:14:55</div>
<div class="abs ns" style="left: 31px; top: 493px; font-size: 14px; color: rgb(64, 64, 64); white-space: nowrap; line-height: 1.2;"><span class="cj">留言：</span>VIVO<span class="cj">测试</span></div>
<div class="abs ns" style="left: 31px; top: 532px; font-size: 13px; letter-spacing: -0.75px; color: rgb(153, 153, 153); white-space: nowrap; line-height: 1.2;">2020-03-25&nbsp; 11:14:55</div>
<div class="abs ns" style="left: 31px; top: 556px; font-size: 14px; color: rgb(45, 45, 45); white-space: nowrap; line-height: 1.2;"><span class="cj">答复：有的</span></div>
<div class="abs" style="left:32px;top:583px;width:102px;height:100px;border-radius:6px;overflow:hidden;background:#2c2c2e">
<svg width="102" height="100" viewBox="0 0 102 100">
<defs><linearGradient id="scr" x1="0" x2="1"><stop offset="0" stop-color="#c9cde3"/><stop offset="0.35" stop-color="#e4e6f0"/><stop offset="0.75" stop-color="#d6d9e6"/><stop offset="1" stop-color="#b7bccb"/></linearGradient>
<linearGradient id="bez" x1="0" x2="1"><stop offset="0" stop-color="#2a2a2b"/><stop offset="0.5" stop-color="#3b3b3c"/><stop offset="1" stop-color="#262627"/></linearGradient></defs>
<rect x="0" y="0" width="33" height="100" fill="url(#scr)"/>
<path d="M6 0 V100 M16 0 V100" stroke="#8a90a8" stroke-width="0.8" stroke-dasharray="2 2"/>
<rect x="27" y="14" width="4" height="80" fill="#c2c6d4"/>
<path d="M12 50 V98" stroke="#6a7088" stroke-width="1.2" stroke-dasharray="1.5 2.5"/>
<rect x="33" y="0" width="8" height="100" fill="#141416"/>
<rect x="34.5" y="8" width="5" height="5" fill="#3a7bd5"/><rect x="34.5" y="24" width="5" height="6" fill="#454a60"/><rect x="34.5" y="42" width="5" height="7" fill="#3cae49"/><rect x="34.5" y="60" width="5" height="6" fill="#2d7fe0"/><rect x="34.5" y="78" width="5" height="6" fill="#d8b13a"/>
<rect x="41" y="0" width="30" height="100" fill="url(#bez)"/>
<text x="0" y="0" transform="translate(52 92) rotate(-90)" font-size="9" font-family="Liberation Sans" font-weight="bold" fill="#4a4a4a">DELL</text>
<rect x="71" y="0" width="31" height="100" fill="#1a1a1b"/>
<g fill="#3a3a3c"><rect x="74" y="-4" width="11" height="17" rx="2"/><rect x="88" y="-4" width="14" height="17" rx="2"/><rect x="74" y="16" width="11" height="24" rx="2"/><rect x="88" y="16" width="14" height="24" rx="2"/><rect x="74" y="43" width="11" height="24" rx="2"/><rect x="88" y="43" width="14" height="24" rx="2"/><rect x="74" y="70" width="11" height="16" rx="2"/><rect x="88" y="70" width="14" height="24" rx="2"/><rect x="74" y="89" width="11" height="14" rx="2"/></g>
<g fill="#4a8fd8"><rect x="78" y="22" width="2" height="4"/><rect x="78" y="50" width="2" height="4"/><rect x="95" y="28" width="2" height="2"/><rect x="95" y="58" width="2" height="2"/></g>
</svg></div>
<div class="abs" style="left:147px;top:583px;width:100px;height:100px;border-radius:6px;overflow:hidden;background:#c4c3c0">
<svg width="100" height="100" viewBox="0 0 100 100">
<defs><linearGradient id="wall" x1="0" x2="1"><stop offset="0" stop-color="#b4b4b1"/><stop offset="0.3" stop-color="#cfcecb"/><stop offset="0.7" stop-color="#a9a8a4"/><stop offset="1" stop-color="#d9d8d4"/></linearGradient>
<linearGradient id="desk" x1="0" x2="1"><stop offset="0" stop-color="#cfc8bf"/><stop offset="1" stop-color="#e4ddd3"/></linearGradient></defs>
<rect x="0" y="0" width="48" height="100" fill="url(#wall)"/>
<rect x="0" y="0" width="7" height="100" fill="#35383c"/>
<rect x="2" y="22" width="2" height="2" fill="#4caf50"/><rect x="2" y="28" width="2" height="2" fill="#e05050"/><rect x="2" y="60" width="2" height="2" fill="#5ba0e0"/>
<rect x="37" y="0" width="8" height="24" fill="#9fd0c8"/><rect x="42" y="0" width="3" height="22" fill="#333"/>
<rect x="48" y="0" width="25" height="100" fill="#1f1f21"/>
<g fill="#2e2e31"><rect x="50" y="2" width="5" height="4"/><rect x="57" y="2" width="5" height="4"/><rect x="64" y="2" width="6" height="4"/><rect x="50" y="9" width="5" height="4"/><rect x="57" y="9" width="5" height="4"/><rect x="64" y="9" width="6" height="4"/><rect x="50" y="16" width="5" height="4"/><rect x="57" y="16" width="5" height="4"/><rect x="64" y="16" width="6" height="4"/><rect x="50" y="23" width="5" height="4"/><rect x="57" y="23" width="5" height="4"/><rect x="64" y="23" width="6" height="4"/><rect x="50" y="30" width="5" height="4"/><rect x="57" y="30" width="5" height="4"/><rect x="64" y="30" width="6" height="4"/><rect x="50" y="37" width="5" height="4"/><rect x="57" y="37" width="5" height="4"/><rect x="64" y="37" width="6" height="4"/><rect x="50" y="44" width="5" height="4"/><rect x="57" y="44" width="5" height="4"/><rect x="64" y="44" width="6" height="4"/><rect x="50" y="51" width="5" height="4"/><rect x="57" y="51" width="5" height="4"/><rect x="64" y="51" width="6" height="4"/><rect x="50" y="58" width="5" height="4"/><rect x="57" y="58" width="5" height="4"/><rect x="64" y="58" width="6" height="4"/><rect x="50" y="65" width="5" height="4"/><rect x="57" y="65" width="5" height="4"/><rect x="64" y="65" width="6" height="4"/><rect x="50" y="72" width="5" height="4"/><rect x="57" y="72" width="5" height="4"/><rect x="64" y="72" width="6" height="4"/><rect x="50" y="79" width="5" height="4"/><rect x="57" y="79" width="5" height="4"/><rect x="64" y="79" width="6" height="4"/><rect x="50" y="86" width="5" height="4"/><rect x="57" y="86" width="5" height="4"/><rect x="64" y="86" width="6" height="4"/><rect x="50" y="93" width="5" height="4"/><rect x="57" y="93" width="5" height="4"/><rect x="64" y="93" width="6" height="4"/></g>
<rect x="73" y="0" width="27" height="100" fill="url(#desk)"/>
<path d="M25 0 Q26 18 30 28 Q20 45 12 42 Q8 48 10 100 M14 55 Q20 62 38 63 Q46 62 50 46" stroke="#1a1a1a" stroke-width="1.6" fill="none"/>
<path d="M11 42 L12 100 M14 44 L15 100" stroke="#111" stroke-width="2.5"/>
<path d="M90 100 Q90 82 97 75 M96 100 Q94 88 100 82" stroke="#222" stroke-width="1.5" fill="none"/>
</svg></div>
<div class="abs" style="left:13px;top:696px;width:454px;height:1px;background:#ececec"></div>
<div class="abs" style="left:239px;top:697px;width:1px;height:40px;background:#ececec"></div>
<svg class="abs" style="left:96px;top:711px" width="14" height="14" viewBox="0 0 14 14"><path d="M1 1.5 L4 1.5 L4 8.5 L1 8.5 Z M4 8.5 L7 12.5 Q8.5 13.5 8.5 11.5 L8 9 L12 9 Q13.2 9 13 7.8 L12 2.5 Q11.6 1.5 10.6 1.5 L4 1.5" stroke="#444" stroke-width="1.1" fill="none" stroke-linejoin="round"></path></svg>
<div class="abs ns" style="left: 116px; top: 711px; font-size: 14px; color: rgb(68, 68, 68); white-space: nowrap; line-height: 1.2;"><span class="cj">未解决</span></div>
<svg class="abs" style="left:323px;top:710px" width="14" height="14" viewBox="0 0 14 14"><path d="M1 5.5 L4 5.5 L4 12.5 L1 12.5 Z M4 5.5 L7 1.5 Q8.5 0.5 8.5 2.5 L8 5 L12 5 Q13.2 5 13 6.2 L12 11.5 Q11.6 12.5 10.6 12.5 L4 12.5" stroke="#3b78c0" stroke-width="1.1" fill="none" stroke-linejoin="round"></path></svg>
<div class="abs ns" style="left: 343px; top: 711px; font-size: 14px; color: rgb(59, 120, 192); white-space: nowrap; line-height: 1.2;"><span class="cj">解决啦</span></div>
<svg class="abs" style="left:145px;top:304px" width="12" height="18" viewBox="0 0 12 18"><path d="M1 1 L1 14 L4 11 L6.5 16.5 L8.5 15.5 L6 10 L10.5 10 Z" fill="#111" stroke="#fff" stroke-width="1"></path></svg>
<svg class="abs" style="left:376px;top:717px" width="12" height="18" viewBox="0 0 12 18"><path d="M1 1 L1 14 L4 11 L6.5 16.5 L8.5 15.5 L6 10 L10.5 10 Z" fill="#111" stroke="#fff" stroke-width="1"></path></svg>
</div>

</body></html>
